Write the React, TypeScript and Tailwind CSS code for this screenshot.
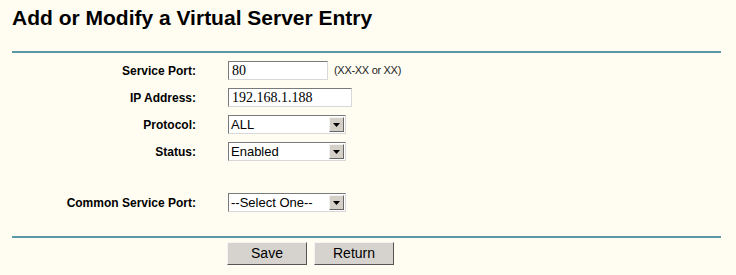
const SelectBox = ({ value }: { value: string }) => (
  <div className="flex h-[19px] w-[118px] items-center border border-t-[#7a7a7a] border-l-[#7a7a7a] border-b-[#d8d8d8] border-r-[#d8d8d8] bg-white">
    <span className="flex-1 pl-[2px] text-[13px] leading-none text-black">{value}</span>
    <span className="mr-[1px] flex h-[15px] w-[15px] items-center justify-center border border-t-[#f2f2f2] border-l-[#f2f2f2] border-b-[#666] border-r-[#666] bg-[#d4d0c8]">
      <svg width="7" height="4" viewBox="0 0 7 4">
        <path d="M0 0h7L3.5 4z" fill="#000" />
      </svg>
    </span>
  </div>
);

const TextBox = ({ value, w }: { value: string; w: string }) => (
  <div
    className={`flex h-[19px] items-center border border-t-[#7a7a7a] border-l-[#7a7a7a] border-b-[#d8d8d8] border-r-[#d8d8d8] bg-white pl-[3px] font-['Liberation_Serif',serif] text-[14px] leading-none text-black ${w}`}
  >
    {value}
  </div>
);

const Label = ({ children }: { children: string }) => (
  <div className="w-[184px] text-right text-[12px] font-bold text-black">{children}</div>
);

export default function App() {
  return (
    <div className="h-[275px] w-[736px] bg-[#fffdf2] font-['Liberation_Sans',Arial,sans-serif] text-black">
      <div className="px-[12px] pt-[6px]">
        <h1 className="text-[21px] font-bold leading-[24px]">Add or Modify a Virtual Server Entry</h1>
      </div>
      <div className="mx-[12px] mt-[21px] h-[2px] w-[709px] bg-[#5b98a6]" />

      <div className="ml-[12px] mt-[4px] flex flex-col">
        <div className="flex h-[27px] items-center gap-[32px]">
          <Label>Service Port:</Label>
          <div className="flex items-center gap-[6px]">
            <TextBox value="80" w="w-[100px]" />
            <span className="text-[11px] tracking-[-0.3px] text-[#222]">(XX-XX or XX)</span>
          </div>
        </div>
        <div className="flex h-[27px] items-center gap-[32px]">
          <Label>IP Address:</Label>
          <TextBox value="192.168.1.188" w="w-[124px]" />
        </div>
        <div className="flex h-[27px] items-center gap-[32px]">
          <Label>Protocol:</Label>
          <SelectBox value="ALL" />
        </div>
        <div className="flex h-[27px] items-center gap-[32px]">
          <Label>Status:</Label>
          <SelectBox value="Enabled" />
        </div>
        <div className="h-[24px]" />
        <div className="flex h-[27px] items-center gap-[32px]">
          <Label>Common Service Port:</Label>
          <SelectBox value="--Select One--" />
        </div>
      </div>

      <div className="mx-[12px] mt-[20px] h-[2px] w-[709px] bg-[#5b98a6]" />

      <div className="ml-[227px] mt-[4px] flex gap-[7px]">
        <div className="flex h-[23px] w-[80px] items-center justify-center border border-t-[#f4f4f4] border-l-[#f4f4f4] border-b-[#555] border-r-[#555] bg-[#d6d3ce] text-[14px]">
          Save
        </div>
        <div className="flex h-[23px] w-[80px] items-center justify-center border border-t-[#f4f4f4] border-l-[#f4f4f4] border-b-[#555] border-r-[#555] bg-[#d6d3ce] text-[14px]">
          Return
        </div>
      </div>
    </div>
  );
}
